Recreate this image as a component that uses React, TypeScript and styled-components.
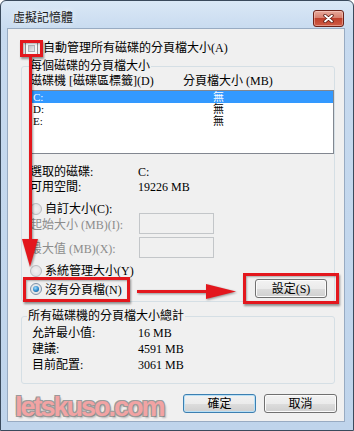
import React from "react";
import styled, { createGlobalStyle } from "styled-components";

const FONT = `"Liberation Serif", "Noto Sans CJK TC", serif`;

const Global = createGlobalStyle`
  html, body { margin: 0; padding: 0; background: #ffffff; }
  body { font-family: ${FONT}; font-size: 12px; color: #000; }
  * { box-sizing: border-box; }
`;

const Window = styled.div`
  position: relative;
  width: 354px;
  height: 431px;
  border: 1px solid #3a4a5c;
  border-radius: 6px 6px 0 0;
  background: linear-gradient(#dae8f6 0px, #c7daef 30px, #bfd4eb 100%);
  display: flex;
  flex-direction: column;
  padding-bottom: 8px;
  overflow: hidden;
`;

const TitleBar = styled.div`
  height: 27px;
  flex: none;
  display: flex;
  align-items: center;
  justify-content: space-between;
  padding: 7px 9px 0 12px;
`;

const Title = styled.span`
  line-height: 14px;
  color: #1a1a1a;
  text-shadow: 0 0 6px rgba(255, 255, 255, 0.9);
`;

const CloseButton = styled.div`
  width: 31px;
  height: 17px;
  border: 1px solid #6c2219;
  border-radius: 3px;
  background: linear-gradient(#e8aa9c 0%, #d8806f 45%, #c0402c 50%, #cf5c45 100%);
  box-shadow: inset 0 0 0 1px rgba(255, 220, 210, 0.45);
  display: flex;
  align-items: center;
  justify-content: center;
`;

const Client = styled.div`
  flex: 1;
  margin: 0 8px 0 6px;
  background: #f0f0f0;
  border: 1px solid #98abc2;
  display: flex;
  flex-direction: column;
  padding-top: 13px;
`;

const CheckRow = styled.label`
  display: flex;
  align-items: center;
  height: 13px;
  margin-left: 17px;
  gap: 5px;
  line-height: 13px;
`;

const CheckBox = styled.span`
  width: 13px;
  height: 13px;
  flex: none;
  border: 1px solid #8e8f8f;
  background: #f6f6f6;
  padding: 2px;
  display: flex;
  &::after {
    content: "";
    flex: 1;
    border: 1px solid #aeb2b7;
    background: linear-gradient(135deg, #bfc3c8, #ebecee);
  }
`;

const GroupBox = styled.div<{ $pad: string; $mt: number }>`
  position: relative;
  margin: ${(p) => p.$mt}px 9px 0 13px;
  border: 1px solid #d5dfe5;
  border-radius: 3px;
  padding: ${(p) => p.$pad};
  display: flex;
  flex-direction: column;
`;

const GroupTitle = styled.span<{ $left: number }>`
  position: absolute;
  top: -8px;
  left: ${(p) => p.$left}px;
  padding: 0 1px;
  line-height: 14px;
  background: #f0f0f0;
`;

const HeaderRow = styled.div`
  display: grid;
  grid-template-columns: 153px 1fr;
  height: 14px;
  line-height: 14px;
`;

const ListBox = styled.div`
  margin: 2px 0 0 -1px;
  height: 64px;
  border: 1px solid #828790;
  background: #ffffff;
`;

const ListRow = styled.div<{ $selected?: boolean }>`
  display: grid;
  grid-template-columns: 180px 1fr;
  height: 12px;
  font-size: 11px;
  line-height: 12px;
  padding-left: 3px;
  background: ${(p) => (p.$selected ? "#3399ff" : "transparent")};
  color: ${(p) => (p.$selected ? "#ffffff" : "#000000")};
`;

const InfoGrid = styled.div<{ $col: number; $lh: number; $mt: number }>`
  display: grid;
  grid-template-columns: ${(p) => p.$col}px 1fr;
  line-height: ${(p) => p.$lh}px;
  margin-top: ${(p) => p.$mt}px;
`;

const RadioRow = styled.div<{ $h: number; $mt: number }>`
  display: flex;
  align-items: center;
  height: ${(p) => p.$h}px;
  margin-top: ${(p) => p.$mt}px;
  line-height: 12px;
`;

const RadioLabel = styled.label`
  display: flex;
  align-items: center;
  gap: 3px;
`;

const Radio = styled.span<{ $checked?: boolean }>`
  width: 12px;
  height: 12px;
  flex: none;
  border-radius: 50%;
  border: 1px solid ${(p) => (p.$checked ? "#7f93a8" : "#b9bcbf")};
  background: radial-gradient(circle at 50% 50%, #f2f2f2 0%, #e2e3e5 70%, #d6d8db 100%);
  display: flex;
  align-items: center;
  justify-content: center;
  &::after {
    content: "";
    width: 6px;
    height: 6px;
    border-radius: 50%;
    display: ${(p) => (p.$checked ? "block" : "none")};
    background: radial-gradient(circle at 40% 35%, #9fdcff 0%, #2b86c9 55%, #0c4a82 100%);
  }
`;

const FieldRow = styled.div<{ $mt: number }>`
  display: grid;
  grid-template-columns: 109px 75px;
  align-items: center;
  height: 21px;
  margin-top: ${(p) => p.$mt}px;
  color: #8c8c8c;
`;

const TextInput = styled.div`
  height: 21px;
  border: 1px solid #c3c6c9;
  background: #f0f0f0;
`;

const PushButton = styled.button<{ $default?: boolean; $w: number }>`
  width: ${(p) => p.$w}px;
  height: 19px;
  padding: 0;
  font-family: ${FONT};
  font-size: 12px;
  line-height: 12px;
  color: #000;
  border: 1px solid ${(p) => (p.$default ? "#3c7fb1" : "#707070")};
  border-radius: 3px;
  background: linear-gradient(#f2f2f2 0%, #ebebeb 50%, #dddddd 50%, #cfcfcf 100%);
  box-shadow: inset 0 0 0 1px ${(p) => (p.$default ? "#b8e0f6" : "#fbfbfb")};
`;

const NoPageRow = styled.div`
  display: flex;
  align-items: center;
  justify-content: space-between;
  height: 19px;
  margin-top: 2px;
  padding-right: 7px;
`;

const BottomRow = styled.div`
  display: flex;
  align-items: flex-start;
  margin: 10px 7px 0 7px;
`;

const Watermark = styled.span`
  font-family: "Liberation Sans", sans-serif;
  font-weight: bold;
  font-size: 27px;
  line-height: 27px;
  letter-spacing: -2px;
  color: #f2a3a3;
  text-shadow: -1px -1px 0 #9a9a9a, 1px -1px 0 #9a9a9a, -1px 1px 0 #9a9a9a,
    1px 1px 0 #8a8a8a, 2px 2px 2px rgba(0, 0, 0, 0.25);
`;

const ButtonGroup = styled.div`
  margin-left: auto;
  display: flex;
  gap: 8px;
`;

const Overlay = styled.div`
  position: absolute;
  top: -1px;
  left: -1px;
  width: 354px;
  height: 431px;
  pointer-events: none;
`;

const RedBox = styled.div<{ $x: number; $y: number; $w: number; $h: number }>`
  position: absolute;
  left: ${(p) => p.$x}px;
  top: ${(p) => p.$y}px;
  width: ${(p) => p.$w}px;
  height: ${(p) => p.$h}px;
  border: 3px solid #e3171d;
  box-shadow: 1px 2px 2px rgba(0, 0, 0, 0.4), inset 1px 1px 2px rgba(0, 0, 0, 0.3);
`;

const ArrowLayer = styled.svg`
  position: absolute;
  left: 0;
  top: 0;
  filter: drop-shadow(1px 1px 1px rgba(0, 0, 0, 0.4));
`;

export default function App() {
  return (
    <>
      <Global />
      <Window>
        <TitleBar>
          <Title>虛擬記憶體</Title>
          <CloseButton>
            <svg width="11" height="9" viewBox="0 0 11 9">
              <path d="M2 1.5 L9 7.5 M9 1.5 L2 7.5" stroke="#5a1a12" strokeWidth="3.4" strokeLinecap="round" />
              <path d="M2 1.5 L9 7.5 M9 1.5 L2 7.5" stroke="#ffffff" strokeWidth="1.8" strokeLinecap="round" />
            </svg>
          </CloseButton>
        </TitleBar>
        <Client>
          <CheckRow>
            <CheckBox />
            <span>自動管理所有磁碟的分頁檔大小(A)</span>
          </CheckRow>

          <GroupBox $mt={11} $pad="7px 0 3px 8px">
            <GroupTitle $left={7}>每個磁碟的分頁檔大小</GroupTitle>
            <HeaderRow>
              <span>磁碟機 [磁碟區標籤](D)</span>
              <span>分頁檔大小 (MB)</span>
            </HeaderRow>
            <ListBox>
              <ListRow $selected>
                <span>C:</span>
                <span>無</span>
              </ListRow>
              <ListRow>
                <span>D:</span>
                <span>無</span>
              </ListRow>
              <ListRow>
                <span>E:</span>
                <span>無</span>
              </ListRow>
            </ListBox>
            <InfoGrid $col={108} $lh={15} $mt={11}>
              <span>選取的磁碟:</span>
              <span>C:</span>
              <span>可用空間:</span>
              <span>19226 MB</span>
            </InfoGrid>
            <RadioRow $h={12} $mt={8}>
              <RadioLabel>
                <Radio />
                <span>自訂大小(C):</span>
              </RadioLabel>
            </RadioRow>
            <FieldRow $mt={-2}>
              <span>起始大小 (MB)(I):</span>
              <TextInput />
            </FieldRow>
            <FieldRow $mt={3}>
              <span>最大值 (MB)(X):</span>
              <TextInput />
            </FieldRow>
            <RadioRow $h={12} $mt={7}>
              <RadioLabel>
                <Radio />
                <span>系統管理大小(Y)</span>
              </RadioLabel>
            </RadioRow>
            <NoPageRow>
              <RadioLabel>
                <Radio $checked />
                <span>沒有分頁檔(N)</span>
              </RadioLabel>
              <PushButton $w={72}>設定(S)</PushButton>
            </NoPageRow>
          </GroupBox>

          <GroupBox $mt={14} $pad="8px 0 10px 10px">
            <GroupTitle $left={5}>所有磁碟機的分頁檔大小總計</GroupTitle>
            <InfoGrid $col={106} $lh={16} $mt={0}>
              <span>允許最小值:</span>
              <span>16 MB</span>
              <span>建議:</span>
              <span>4591 MB</span>
              <span>目前配置:</span>
              <span>3061 MB</span>
            </InfoGrid>
          </GroupBox>

          <BottomRow>
            <Watermark>letskuso.com</Watermark>
            <ButtonGroup>
              <PushButton $default $w={73}>確定</PushButton>
              <PushButton $w={73}>取消</PushButton>
            </ButtonGroup>
          </BottomRow>
        </Client>

        <Overlay>
          <RedBox $x={20} $y={40} $w={23} $h={17} />
          <RedBox $x={23} $y={277} $w={107} $h={25} />
          <RedBox $x={243} $y={273} $w={96} $h={31} />
          <ArrowLayer width="354" height="431" viewBox="0 0 354 431">
            <rect x="29" y="57" width="3" height="184" fill="#e3171d" />
            <polygon points="22,239 38,239 30,267" fill="#e3171d" />
            <rect x="137" y="290" width="71" height="3" fill="#e3171d" />
            <polygon points="206,284 206,299 236,291.5" fill="#e3171d" />
          </ArrowLayer>
        </Overlay>
      </Window>
    </>
  );
}
